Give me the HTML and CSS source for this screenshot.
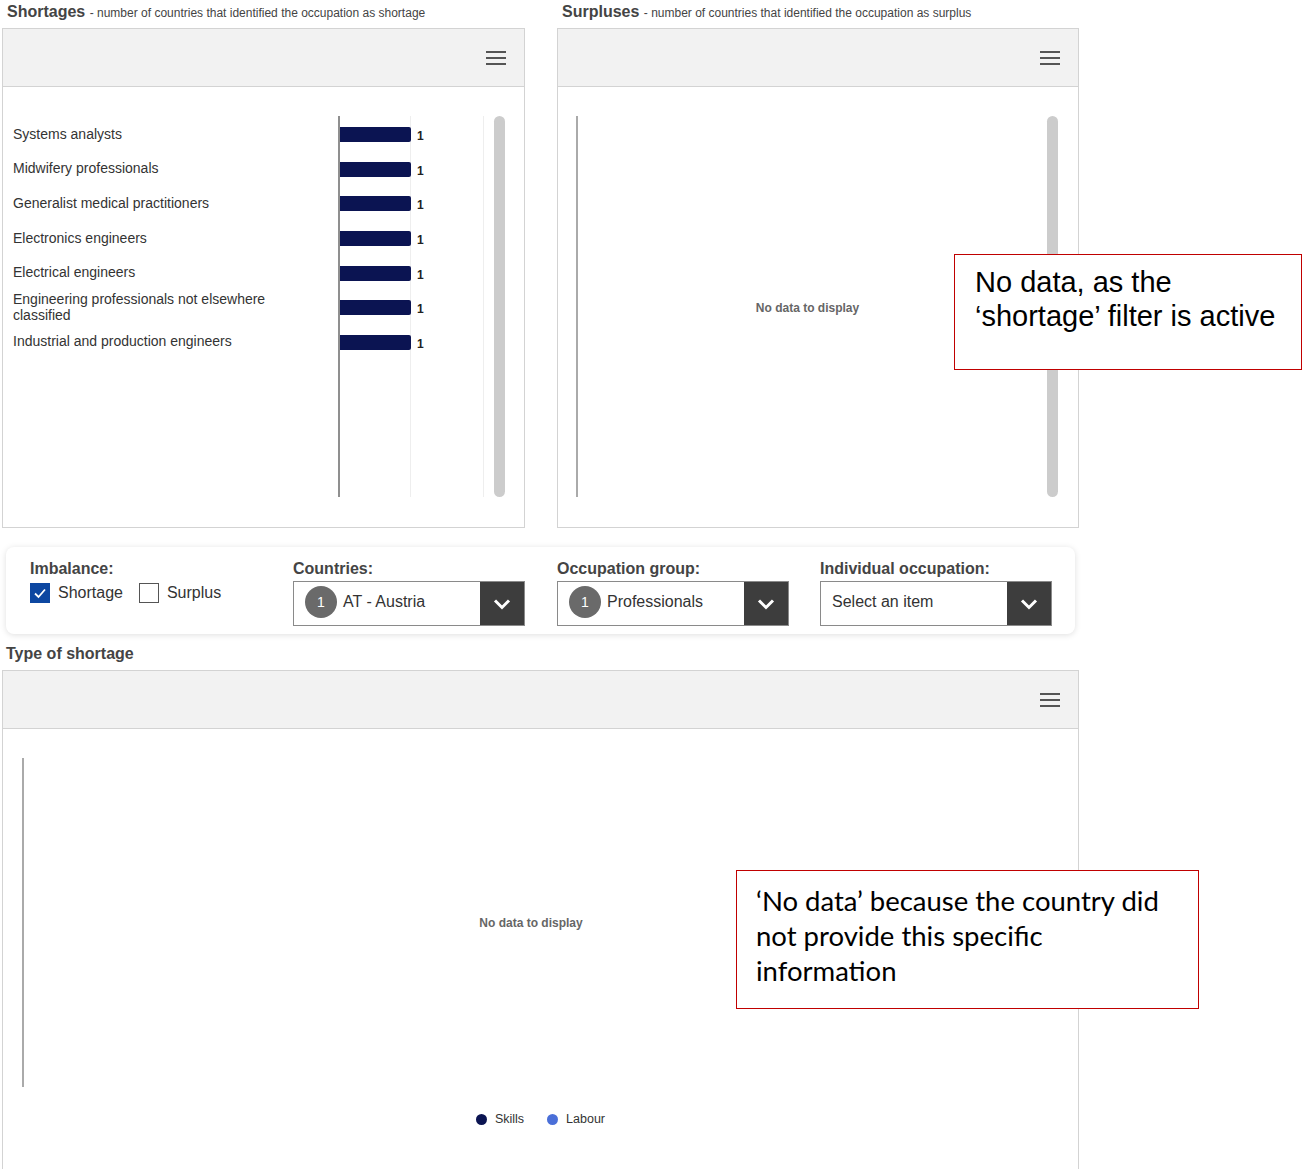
FILE: index.html
```html
<!DOCTYPE html>
<html lang="en">
<head>
<meta charset="utf-8">
<title>Occupational imbalances</title>
<link rel="stylesheet" href="styles.css">
</head>
<body>
<div class="page">
  <div class="top-row">
    <section class="chart-col chart-col-left">
      <h2 class="chart-title">Shortages <span class="chart-sub">- number of countries that identified the occupation as shortage</span></h2>
      <div class="panel">
        <div class="panel-head">
          <svg class="menu-icon" width="20" height="14" viewBox="0 0 20 14"><path d="M0 1H20M0 7H20M0 13H20" stroke="#555" stroke-width="2"/></svg>
        </div>
        <div class="panel-body">
          <div class="plot-wrap">
            <div class="bar-plot">
              <div class="bar-row"><span class="bar-label">Systems analysts</span><span class="bar" style="width:71px"></span><span class="bar-val">1</span></div>
              <div class="bar-row"><span class="bar-label">Midwifery professionals</span><span class="bar" style="width:71px"></span><span class="bar-val">1</span></div>
              <div class="bar-row"><span class="bar-label">Generalist medical practitioners</span><span class="bar" style="width:71px"></span><span class="bar-val">1</span></div>
              <div class="bar-row"><span class="bar-label">Electronics engineers</span><span class="bar" style="width:71px"></span><span class="bar-val">1</span></div>
              <div class="bar-row"><span class="bar-label">Electrical engineers</span><span class="bar" style="width:71px"></span><span class="bar-val">1</span></div>
              <div class="bar-row"><span class="bar-label">Engineering professionals not elsewhere classified</span><span class="bar" style="width:71px"></span><span class="bar-val">1</span></div>
              <div class="bar-row"><span class="bar-label">Industrial and production engineers</span><span class="bar" style="width:71px"></span><span class="bar-val">1</span></div>
            </div>
            <div class="scrollbar"></div>
          </div>
        </div>
      </div>
    </section>

    <section class="chart-col chart-col-right">
      <h2 class="chart-title">Surpluses <span class="chart-sub">- number of countries that identified the occupation as surplus</span></h2>
      <div class="panel">
        <div class="panel-head">
          <svg class="menu-icon" width="20" height="14" viewBox="0 0 20 14"><path d="M0 1H20M0 7H20M0 13H20" stroke="#555" stroke-width="2"/></svg>
        </div>
        <div class="panel-body">
          <div class="plot-wrap plot-wrap-empty">
            <div class="empty-plot">
              <span class="no-data">No data to display</span>
            </div>
            <div class="scrollbar"></div>
          </div>
        </div>
      </div>
    </section>
  </div>

  <div class="filters">
    <div class="filter">
      <div class="filter-label">Imbalance:</div>
      <div class="checks">
        <label class="check"><span class="box box-on"><svg width="14" height="12" viewBox="0 0 14 12"><path d="M2 6.5L5.5 10L12 2.5" fill="none" stroke="#fff" stroke-width="1.8"/></svg></span>Shortage</label>
        <label class="check"><span class="box"></span>Surplus</label>
      </div>
    </div>
    <div class="filter">
      <div class="filter-label">Countries:</div>
      <div class="select">
        <span class="badge">1</span><span class="select-text">AT - Austria</span>
        <span class="select-btn"><svg width="18" height="12" viewBox="0 0 18 12"><path d="M2 2.5L9 9.5L16 2.5" fill="none" stroke="#fff" stroke-width="3"/></svg></span>
      </div>
    </div>
    <div class="filter">
      <div class="filter-label">Occupation group:</div>
      <div class="select">
        <span class="badge">1</span><span class="select-text">Professionals</span>
        <span class="select-btn"><svg width="18" height="12" viewBox="0 0 18 12"><path d="M2 2.5L9 9.5L16 2.5" fill="none" stroke="#fff" stroke-width="3"/></svg></span>
      </div>
    </div>
    <div class="filter">
      <div class="filter-label">Individual occupation:</div>
      <div class="select">
        <span class="select-text select-placeholder">Select an item</span>
        <span class="select-btn"><svg width="18" height="12" viewBox="0 0 18 12"><path d="M2 2.5L9 9.5L16 2.5" fill="none" stroke="#fff" stroke-width="3"/></svg></span>
      </div>
    </div>
  </div>

  <h2 class="section-title">Type of shortage</h2>
  <div class="panel panel-wide">
    <div class="panel-head">
      <svg class="menu-icon" width="20" height="14" viewBox="0 0 20 14"><path d="M0 1H20M0 7H20M0 13H20" stroke="#555" stroke-width="2"/></svg>
    </div>
    <div class="panel-body">
      <div class="wide-plot">
        <span class="no-data">No data to display</span>
      </div>
      <div class="legend">
        <span class="legend-item"><span class="dot dot-skills"></span>Skills</span>
        <span class="legend-item"><span class="dot dot-labour"></span>Labour</span>
      </div>
    </div>
  </div>

  <div class="note note-filter">No data, as the<br>‘shortage’ filter is active</div>
  <div class="note note-country">‘No data’ because the country did<br>not provide this specific<br>information</div>
</div>
</body>
</html>
```

FILE: styles.css
```css
html, body {
  margin: 0;
  padding: 0;
  background: #fff;
}

body {
  font-family: "Liberation Sans", Arial, sans-serif;
  color: #333;
  width: 1302px;
  overflow: hidden;
}

.page {
  position: relative;
  padding-left: 2px;
  height: 1169px;
}

/* ---------- top charts ---------- */
.top-row {
  display: flex;
  gap: 32px;
}

.chart-col-left { width: 523px; }
.chart-col-right { width: 522px; }

.chart-title {
  margin: 0;
  height: 28px;
  padding-left: 5px;
  font-size: 16px;
  line-height: 24px;
  font-weight: bold;
  color: #444;
  white-space: nowrap;
}

.chart-sub {
  font-size: 12px;
  font-weight: normal;
  color: #444;
}

.panel {
  box-sizing: border-box;
  height: 500px;
  border: 1px solid #d3d3d3;
  background: #fff;
}

.panel-head {
  height: 57px;
  background: #f2f2f2;
  border-bottom: 1px solid #d3d3d3;
  display: flex;
  justify-content: flex-end;
  align-items: center;
  padding-right: 18px;
}

.panel-body {
  padding-top: 29px;
}

.plot-wrap {
  display: flex;
  margin-left: 10px;
  height: 381px;
}

/* bar chart: axis at 326px, light grid lines at 397px and 470px */
.bar-plot {
  width: 481px;
  height: 381px;
  background:
    linear-gradient(#8f8f8f, #8f8f8f) 325px 0 / 2px 100% no-repeat,
    linear-gradient(#eeeeee, #eeeeee) 397px 0 / 1px 100% no-repeat,
    linear-gradient(#eeeeee, #eeeeee) 470px 0 / 1px 100% no-repeat;
}

.bar-row {
  height: 34.6px;
  display: flex;
  align-items: center;
}

.bar-label {
  width: 270px;
  margin-right: 57px;
  padding-top: 1px;
  font-size: 14px;
  line-height: 16px;
  color: #333;
}

.bar {
  height: 15px;
  margin-top: 3px;
  background: #0b1452;
  border-radius: 0 2px 2px 0;
}

.bar-val {
  margin-left: 6px;
  margin-top: 6px;
  font-size: 12px;
  font-weight: bold;
  color: #222;
}

.scrollbar {
  width: 11px;
  height: 381px;
  border-radius: 6px;
  background: #cccccc;
}

.plot-wrap-empty {
  margin-left: 18px;
}

.empty-plot {
  width: 471px;
  border-left: 2px solid #aaa;
  display: flex;
  align-items: center;
  justify-content: center;
  padding-right: 10px;
  padding-top: 2px;
  box-sizing: border-box;
}

.no-data {
  font-size: 12px;
  font-weight: bold;
  color: #666;
}

/* ---------- filter bar ---------- */
.filters {
  box-sizing: border-box;
  margin: 19px 0 0 4px;
  width: 1069px;
  height: 87px;
  padding: 13px 24px 0;
  background: #fff;
  border-radius: 8px;
  box-shadow: 0 1px 6px rgba(0, 0, 0, 0.13);
  display: grid;
  grid-template-columns: 263px 264px 263px 240px;
}

.filter-label {
  font-size: 16px;
  line-height: 18px;
  font-weight: bold;
  color: #444;
  white-space: nowrap;
}

.checks {
  display: flex;
  align-items: center;
  margin-top: 5px;
  font-size: 16px;
  color: #333;
}

.check {
  display: flex;
  align-items: center;
  margin-right: 16px;
}

.box {
  box-sizing: border-box;
  width: 20px;
  height: 20px;
  border: 1px solid #555;
  margin-right: 8px;
  display: flex;
  align-items: center;
  justify-content: center;
  background: #fff;
}

.box-on {
  background: #0d47a1;
  border-color: #0d47a1;
}

.select {
  box-sizing: border-box;
  margin-top: 3px;
  width: 232px;
  height: 45px;
  border: 1px solid #8a8a8a;
  display: flex;
  align-items: center;
  padding-left: 11px;
  font-size: 16px;
  color: #333;
}

.badge,
.select-text {
  margin-bottom: 4px;
}

.badge {
  width: 32px;
  height: 32px;
  border-radius: 50%;
  background: #6a6a6a;
  color: #fff;
  font-size: 14px;
  display: flex;
  align-items: center;
  justify-content: center;
  margin-right: 6px;
  flex: none;
}

.select-btn {
  margin-left: auto;
  width: 44px;
  height: 100%;
  background: #3d3d3d;
  display: flex;
  align-items: center;
  justify-content: center;
}

/* ---------- type of shortage ---------- */
.section-title {
  margin: 0;
  height: 36px;
  box-sizing: border-box;
  padding: 8px 0 0 4px;
  font-size: 16px;
  line-height: 24px;
  font-weight: bold;
  color: #444;
}

.panel-wide {
  width: 1077px;
  height: 540px;
}

.wide-plot {
  margin-left: 19px;
  width: 1014px;
  height: 329px;
  border-left: 2px solid #aaa;
  display: flex;
  align-items: center;
  justify-content: center;
}

.legend {
  margin-top: 25px;
  display: flex;
  justify-content: center;
  gap: 23px;
  font-size: 12.5px;
  color: #333;
}

.legend-item {
  display: flex;
  align-items: center;
}

.dot {
  width: 11px;
  height: 11px;
  border-radius: 50%;
  margin-right: 8px;
}

.dot-skills { background: #0b1452; }
.dot-labour { background: #4a6fd8; }

/* ---------- callouts ---------- */
.note {
  position: absolute;
  box-sizing: border-box;
  border: 1.5px solid #c00000;
  background: #fff;
  color: #000;
}

.note-filter {
  left: 954px;
  top: 254px;
  width: 348px;
  height: 116px;
  padding: 10px 0 0 20px;
  font-family: "Liberation Sans", Arial, sans-serif;
  font-size: 29px;
  line-height: 34px;
}

.note-country {
  left: 736px;
  top: 870px;
  width: 463px;
  height: 139px;
  padding: 12px 0 0 19px;
  font-family: Lato, "Open Sans", sans-serif;
  font-size: 27.5px;
  line-height: 35px;
}
```
